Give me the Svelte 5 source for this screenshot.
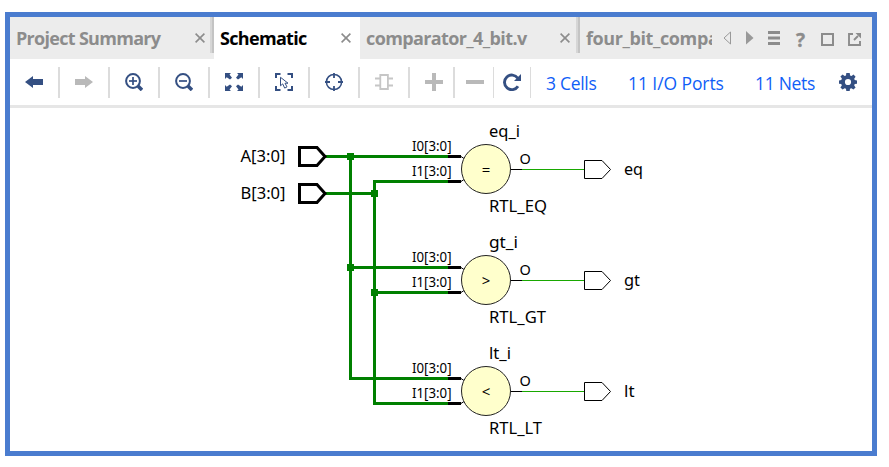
<script>
  const tabs = [
    { label: 'Project Summary', width: 204, gap: 9, spacing: -0.7, divider: true },
    { label: 'Schematic', width: 146, gap: 9, spacing: -0.68, active: true },
    { label: 'comparator_4_bit.v', width: 220, gap: 10, spacing: -0.62, divider: true }
  ];
  const tools = [
    { icon: 'back', width: 50 },
    { icon: 'forward', width: 50 },
    { icon: 'zoomIn', width: 50 },
    { icon: 'zoomOut', width: 50 },
    { icon: 'fit', width: 50 },
    { icon: 'select', width: 50 },
    { icon: 'target', width: 50 },
    { icon: 'chip', width: 50 },
    { icon: 'plus', width: 45, shift: 5 },
    { icon: 'minus', width: 39, shift: 2, thin: true },
    { icon: 'reload', width: 37, thin: true }
  ];
  const gates = [
    { name: 'eq_i', nameW: 30, type: 'RTL_EQ', typeW: 57, op: '=', out: 'eq', outW: 18, dy: 0 },
    { name: 'gt_i', nameW: 28, type: 'RTL_GT', typeW: 56, op: '>', out: 'gt', outW: 15, dy: 111 },
    { name: 'lt_i', nameW: 21, type: 'RTL_LT', typeW: 52, op: '<', out: 'lt', outW: 9.5, dy: 222 }
  ];
  const inputs = [
    { label: 'A[3:0]', y: 156.5 },
    { label: 'B[3:0]', y: 193.5 }
  ];
  const junctions = [[350.5, 156.5], [374.5, 193.5], [350.5, 267.5], [374.5, 292.5]];
</script>

{#snippet glyph(name)}
  <svg class="glyph" viewBox="0 0 18 18" width="18" height="18">
    {#if name === 'back'}
      <path class="navy" d="M0 9 8 3v3h10v6H8v3z" />
    {:else if name === 'forward'}
      <path class="grey" d="M18 9 10 3v3H0v6h10v3z" />
    {:else if name === 'zoomIn' || name === 'zoomOut'}
      <circle class="line" cx="8" cy="8" r="6.9" stroke-width="2" />
      <path class="line" d="M4 8h8" stroke-width="1.7" />
      {#if name === 'zoomIn'}<path class="line" d="M8 4v8" stroke-width="1.7" />{/if}
      <path class="line" d="m13 13 4 4" stroke-width="3.6" />
    {:else if name === 'fit'}
      <path class="navy" d="M0 0h6L4.500 1.500 7 4.800 5 6.500 1.700 4.200 0 6zM18 0v6l-1.700-1.800L13 6.500 11 4.800l2.500-3.300L12 0zM0 18v-6l1.700 1.800L5 11.500l2 1.700-2.500 3.300L6 18zM18 18h-6l1.500-1.500L11 13.200l2-1.700 3.300 2.300L18 12z" />
    {:else if name === 'select'}
      <path class="line" d="M1 5V1h4.500M12.500 1H17v4M1 13v4h4.500M12.500 17H17v-4" stroke-width="2" />
      <path class="line" d="M5.500 4.300v8.500l2.200-1.900 2 4.200 2.300-1.200-2-3.700h3z" stroke-width="1" />
    {:else if name === 'target'}
      <circle class="line" cx="9" cy="9" r="7.600" stroke-width="1.500" />
      <path class="line" d="M9 0v5M9 13V18M0 9h5M13 9H18" stroke-width="1.800" />
    {:else if name === 'chip'}
      <path class="faint" d="M5.300 2h7.600v14H5.300zM0 5.500h5M0 12.500h5M13 5.500h5M13 12.500h5" />
    {:else if name === 'plus'}
      <path class="grey" d="M7 0h4v7h7v4h-7v7H7v-7H0V7h7z" />
    {:else if name === 'minus'}
      <path class="grey" d="M0 7h18v4H0z" />
    {:else if name === 'reload'}
      <path class="line" d="M14.800 5.200A7.300 7.300 0 1 0 15 13.200" stroke-width="2.900" />
      <path class="navy" d="M18 1v7h-7z" />
    {:else if name === 'gear'}
      <path class="navy" fill-rule="evenodd" d="M7.300 0h3.400l.4 2.400 1.400.6 2-1.500 2.100 2.200-1.400 2 .5 1.400L18 7.400v3.300l-2.300.3-.5 1.400 1.400 2-2.200 2.200-2-1.400-1.400.5-.3 2.300H7.300L7 15.700l-1.400-.5-2 1.400-2.200-2.200 1.400-2-.5-1.400L0 10.700V7.400L2.300 7l.6-1.400-1.500-2 2.200-2.100 2 1.400L7 2.400zM9 5.900a3.100 3.100 0 1 0 0 6.200 3.100 3.100 0 0 0 0-6.200z" />
    {/if}
  </svg>
{/snippet}

<main class="frame">
  <header class="tabs">
    {#each tabs as tab}
      <div class="tab" class:active={tab.active} class:divider={tab.divider} style:width="{tab.width}px" style:padding-right="{tab.gap}px">
        <span style:letter-spacing="{tab.spacing}px">{tab.label}</span>
        <svg width="10" height="10" viewBox="0 0 10 10"><path d="m.6.600 8.800 8.800M9.400.600.600 9.400" /></svg>
      </div>
    {/each}
    <div class="tab last"><span>four_bit_compa</span></div>
    <div class="controls">
      <svg width="8" height="14" viewBox="0 0 8 14"><path d="M7.500 1v12L1 7z" fill="none" stroke="#999" /></svg>
      <svg width="8" height="14" viewBox="0 0 8 14"><path d="M0 0v13.500L7.500 7z" fill="#999" /></svg>
      <svg width="12" height="14" viewBox="0 0 12 14"><path d="M0 0h12v3H0zM0 5.500h12v3H0zM0 11h12v3H0z" fill="#8c8c8c" /></svg>
      <b>?</b>
      <svg class="low" width="13" height="13" viewBox="0 0 13 13"><path d="M1 1h11v11H1z" fill="none" stroke="#8c8c8c" stroke-width="2" /></svg>
      <svg class="low" width="13" height="13" viewBox="0 0 13 13"><path d="M5 1H1v11h11V8M6 7l4-4" fill="none" stroke="#8c8c8c" stroke-width="1.900" /><path d="M7.500 0H13v5.500z" fill="#8c8c8c" /></svg>
    </div>
  </header>

  <nav class="toolbar">
    {#each tools as tool}
      <div class="tool" class:thin={tool.thin} style:width="{tool.width}px" style:padding-left="{tool.shift ?? 0}px">{@render glyph(tool.icon)}</div>
    {/each}
    <div class="links">
      <a class="cells" href="#cells">3 Cells</a>
      <a class="ports" href="#ports">11 I/O Ports</a>
      <a class="nets" href="#nets">11 Nets</a>
    </div>
    {@render glyph('gear')}
  </nav>

  <svg class="schematic" viewBox="10 108 862 343" width="862" height="343">
    <g class="bus">
      <path d="M325 156.500H448M350.500 156.500V378.500H448M350.500 267.500H448" />
      <path d="M325 193.500H374.500M448 181.500H374.500V403.500H448M374.500 292.500H448" />
    </g>
    {#each junctions as [x, y]}
      <rect x={x - 3.5} y={y - 3.5} width="7" height="7" fill="#008000" />
    {/each}
    {#each inputs as port}
      <text x="240.500" y={port.y + 5.3} font-size="16" textLength="45" lengthAdjust="spacingAndGlyphs">{port.label}</text>
      <path class="input" d="M299.500 {port.y - 9}H317L325 {port.y}L317 {port.y + 9}H299.500Z" />
    {/each}
    {#each gates as gate}
      <g transform="translate(0 {gate.dy})">
        <path d="M448 156.500H461M448 181.500H461" stroke="#000" stroke-width="3" />
        <path d="M461 156.500 464 158.500M461 181.500 464 179.500M511 169.500H522" stroke="#000" />
        <path d="M522 169.500H585" stroke="#18a800" />
        <circle cx="486" cy="169" r="24.500" fill="#ffffcc" stroke="#222" />
        <path d="M584.500 160.500H602L610.500 169.500 602 178.500H584.500Z" fill="#fff" stroke="#000" />
        <text x="412" y="151" font-size="14" textLength="39.500" lengthAdjust="spacingAndGlyphs">I0[3:0]</text>
        <text x="412" y="176" font-size="14" textLength="39.500" lengthAdjust="spacingAndGlyphs">I1[3:0]</text>
        <text x="519.500" y="164" font-size="14.500">O</text>
        <text x="486" y="174.500" font-size="15" text-anchor="middle">{gate.op}</text>
        <text x="489" y="137" font-size="16" textLength={gate.nameW + 1} lengthAdjust="spacingAndGlyphs">{gate.name}</text>
        <text x="489" y="211.500" font-size="16" textLength={gate.typeW + 1} lengthAdjust="spacingAndGlyphs">{gate.type}</text>
        <text x="624" y="175" font-size="16" textLength={gate.outW + 1} lengthAdjust="spacingAndGlyphs">{gate.out}</text>
      </g>
    {/each}
  </svg>
</main>

<style>
  :global(body) { background: #fff; }
  .frame {
    box-sizing: border-box;
    width: 872px;
    height: 444px;
    margin: 12px 0 0 5px;
    border: 5px solid #4a7ccf;
    background: #fff;
    font-family: "Open Sans", "Noto Sans", sans-serif;
    overflow: hidden;
  }
  .tabs { display: flex; height: 42px; background: #ececec; }
  .tab {
    box-sizing: border-box;
    display: flex;
    align-items: center;
    justify-content: space-between;
    padding-left: 6px;
    color: #8c8c8c;
    font-size: 18px;
    font-weight: 700;
    white-space: nowrap;
    flex: none;
    background: linear-gradient(#c4c4c4, #c4c4c4) right top / 2px 36px no-repeat,
      linear-gradient(#d6d6d6, #d6d6d6) right top / 4px 36px no-repeat;
  }
  .tab:not(.divider) { background: none; }
  .tab.active { background: #fff; color: #000; }
  .tab span { line-height: 42px; }
  .tab path { stroke: #8c8c8c; stroke-width: 1.6; }
  .last { width: 132px; overflow: hidden; letter-spacing: -0.4px; }
  .controls { display: flex; margin: 14px 0 0 11px; align-items: flex-start; color: #8c8c8c; }
  .controls svg:nth-child(2) { margin-left: 15px; }
  .controls svg:nth-child(3) { margin-left: 14px; }
  .controls b { width: 11px; margin: 0 0 0 16px; font-size: 19px; line-height: 18px; -webkit-text-stroke: 0.4px #8c8c8c; }
  .controls .low { margin: 2px 0 0 14px; }
  .toolbar {
    display: flex;
    align-items: center;
    height: 46px;
    border-bottom: 3px solid #e6e6e6;
  }
  .tool {
    box-sizing: border-box;
    display: flex;
    align-items: center;
    justify-content: center;
    height: 31px;
    border-right: 2px solid #dcdcdc;
  }
  .tool.thin { border-right-width: 1px; }
  .glyph { display: block; flex: none; }
  .navy { fill: #344f82; }
  .line { fill: none; stroke: #344f82; }
  .grey { fill: #b9b9b9; }
  .faint { fill: none; stroke: #c6c6c6; stroke-width: 1.8; }
  .links { display: flex; width: 308px; padding-top: 2px; }
  .links a { color: #0f5ef7; font-size: 17.5px; line-height: 24px; text-decoration: none; white-space: nowrap; flex: none; }
  .cells { width: 82px; margin-left: 15px; letter-spacing: -0.3px; }
  .ports { width: 127px; letter-spacing: -0.08px; }
  .nets { letter-spacing: -0.3px; }
  .schematic { display: block; font-family: "Noto Sans", "Open Sans", sans-serif; }
  .bus { fill: none; stroke: #008000; stroke-width: 3; }
  .input { fill: #fff; stroke: #000; stroke-width: 3; }
</style>
